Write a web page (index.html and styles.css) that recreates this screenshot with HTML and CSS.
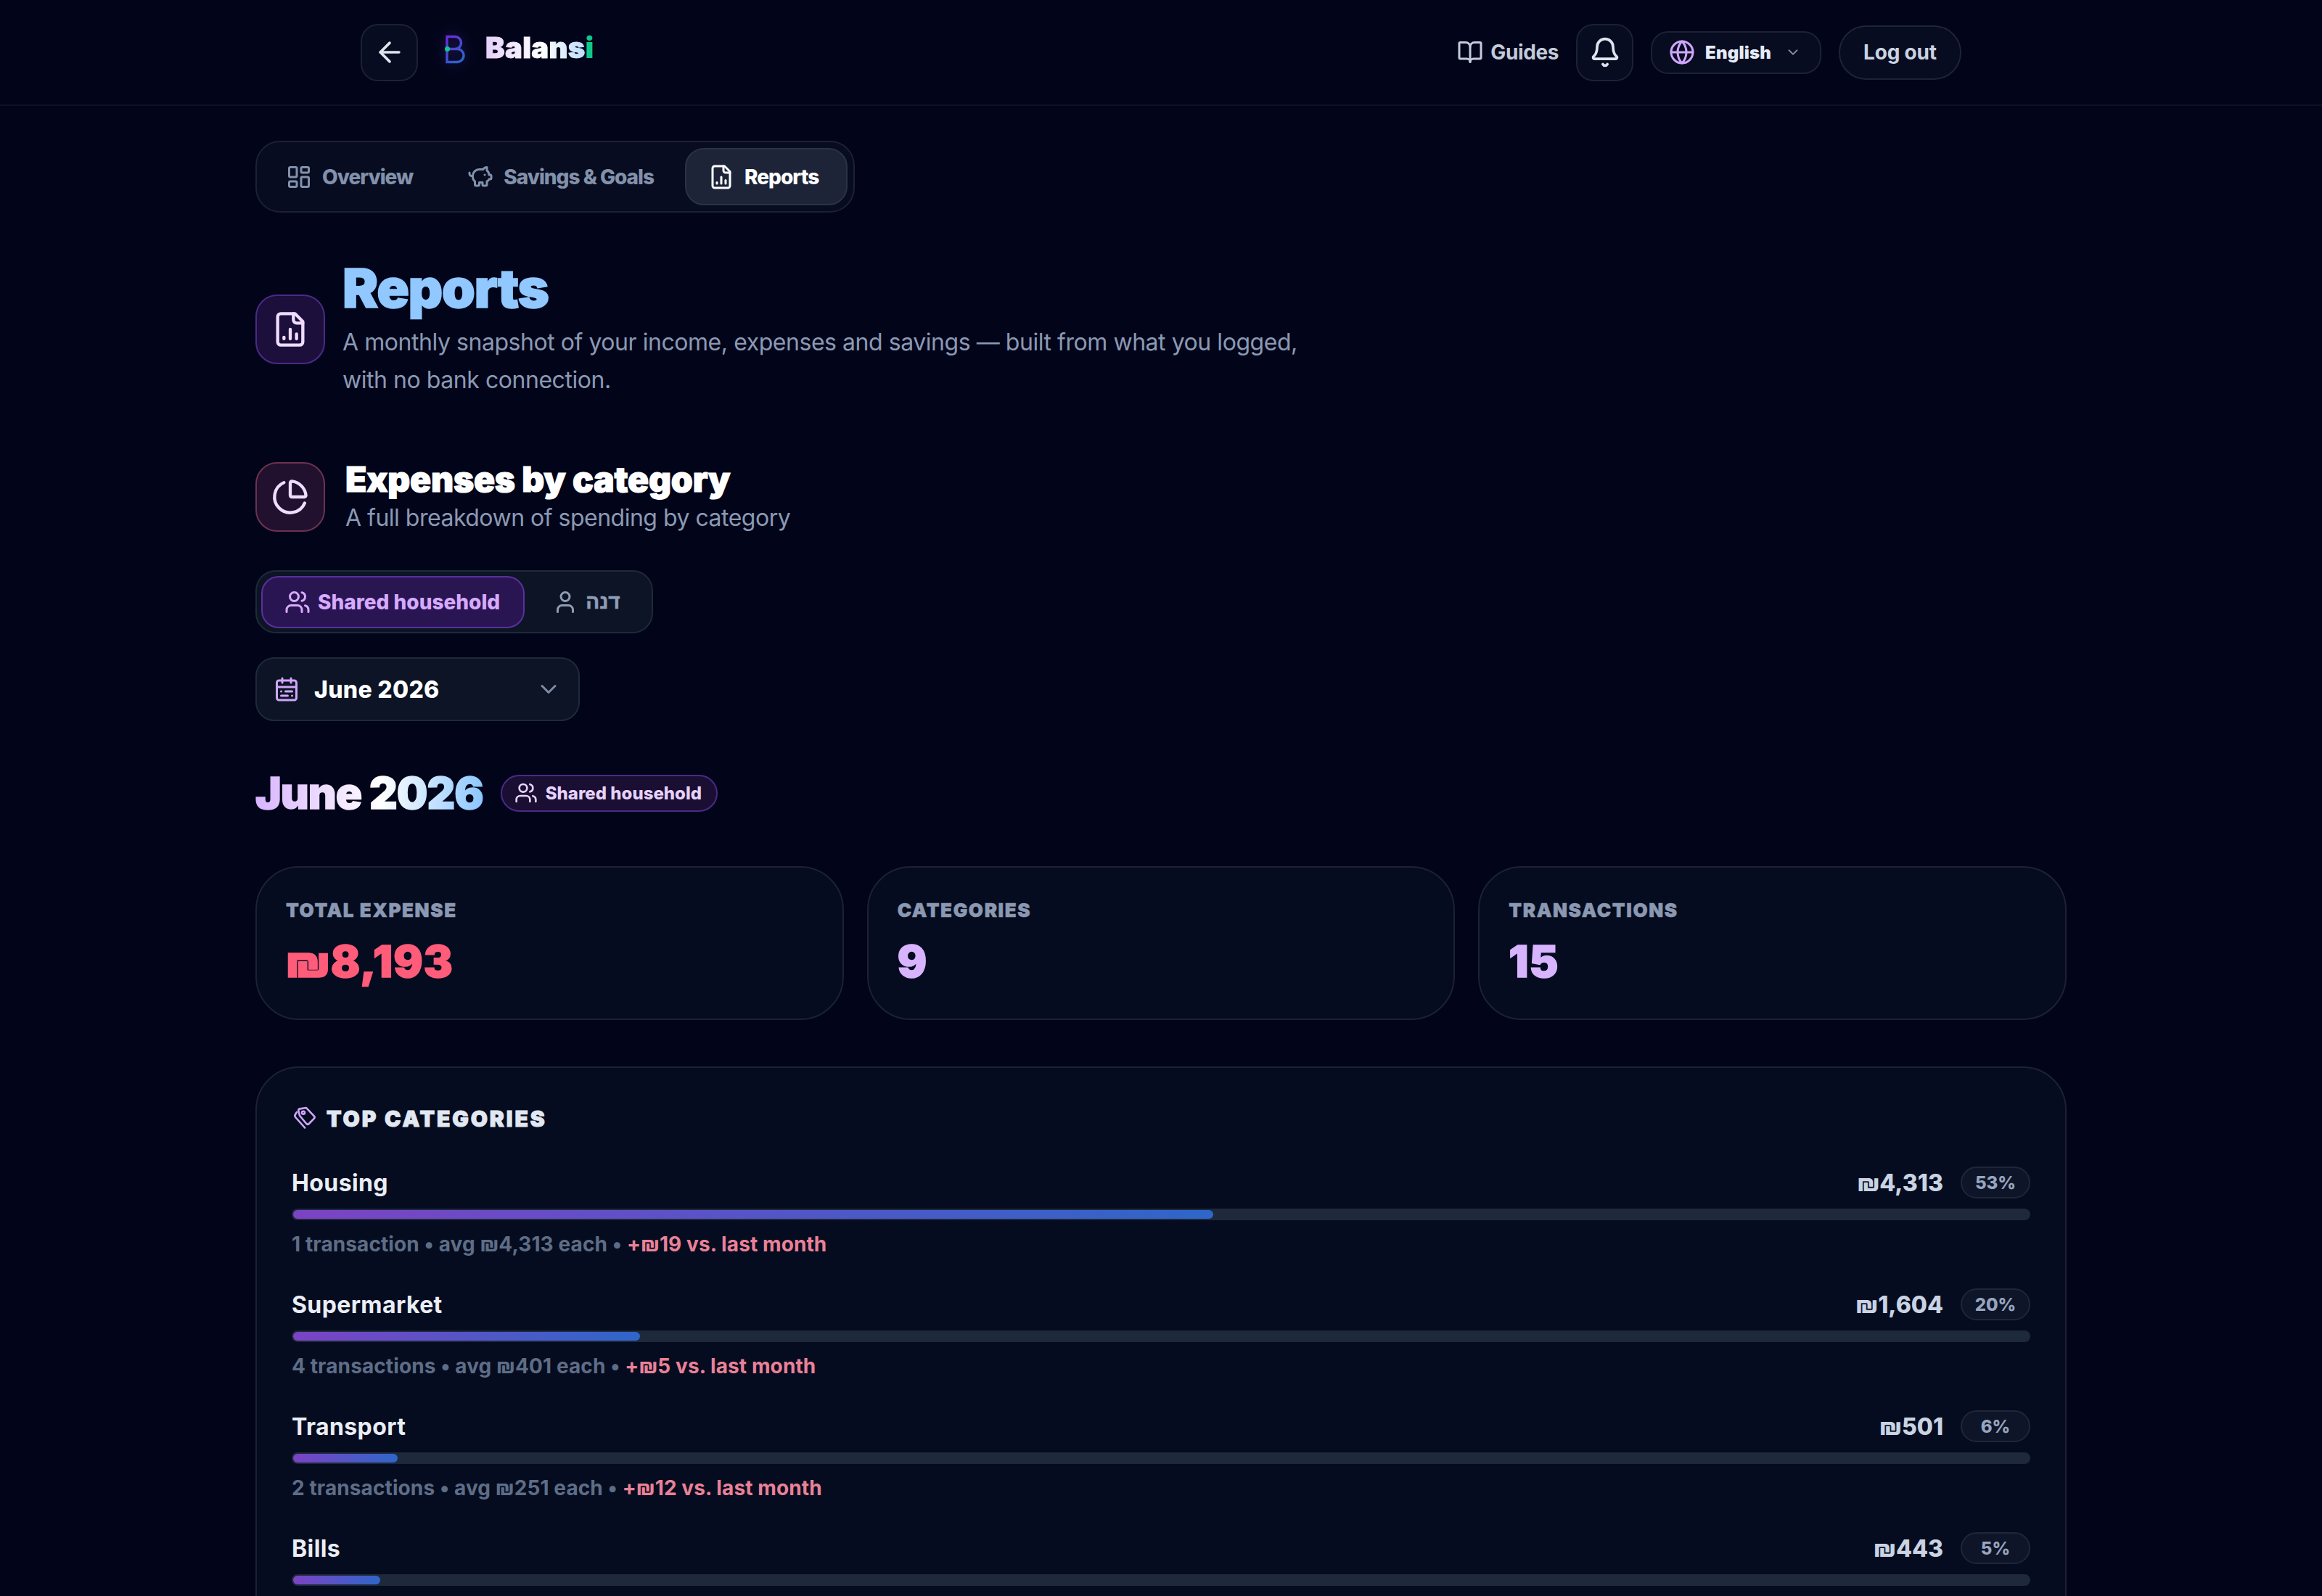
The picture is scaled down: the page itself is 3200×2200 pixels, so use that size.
FILE: index.html
```html
<!DOCTYPE html>
<html lang="en">
<head>
  <meta charset="UTF-8" />
  <meta name="viewport" content="width=device-width, initial-scale=1.0" />
  <title>Balansi - Reports</title>
  <link rel="stylesheet" href="styles.css">
</head>
<body>
  <svg class="sprite" aria-hidden="true">
    <defs>
      <linearGradient id="logoGrad" x1="0" y1="0" x2="0.6" y2="1">
        <stop offset="0" stop-color="#6d2bd9" />
        <stop offset="1" stop-color="#2f62c9" />
      </linearGradient>
      <symbol id="i-back" viewBox="0 0 24 24"><path d="m12 19-7-7 7-7" /><path d="M19 12H5" /></symbol>
      <symbol id="i-grid" viewBox="0 0 24 24"><rect x="3" y="3" width="7" height="9" rx="1" /><rect x="14" y="3" width="7" height="5" rx="1" /><rect x="14" y="12" width="7" height="9" rx="1" /><rect x="3" y="16" width="7" height="5" rx="1" /></symbol>
      <symbol id="i-piggy" viewBox="0 0 24 24"><path d="M11 17h3v2a1 1 0 0 0 1 1h2a1 1 0 0 0 1-1v-3a3.160 3.160 0 0 0 2-2h1a1 1 0 0 0 1-1v-2a1 1 0 0 0-1-1h-1a5 5 0 0 0-2-4V3a4 4 0 0 0-3.200 1.600l-.3.4H11a6 6 0 0 0-6 6v1a5 5 0 0 0 2 4v3a1 1 0 0 0 1 1h2a1 1 0 0 0 1-1z" /><path d="M16 10h.01" /><path d="M2 8v1a2 2 0 0 0 2 2h1" /></symbol>
      <symbol id="i-report" viewBox="0 0 24 24"><path d="M15 2H6a2 2 0 0 0-2 2v16a2 2 0 0 0 2 2h12a2 2 0 0 0 2-2V7Z" /><path d="M14 2v4a2 2 0 0 0 2 2h4" /><path d="M8 18v-1" /><path d="M12 18v-6" /><path d="M16 18v-3" /></symbol>
      <symbol id="i-pie" viewBox="0 0 24 24"><path d="M21 12c.552 0 1.005-.449.95-.998a10 10 0 0 0-8.953-8.951c-.55-.055-.998.398-.998.95v8a1 1 0 0 0 1 1z" /><path d="M21.210 15.890A10 10 0 1 1 8 2.830" /></symbol>
      <symbol id="i-users" viewBox="0 0 24 24"><path d="M16 21v-2a4 4 0 0 0-4-4H6a4 4 0 0 0-4 4v2" /><circle cx="9" cy="7" r="4" /><path d="M22 21v-2a4 4 0 0 0-3-3.870" /><path d="M16 3.130a4 4 0 0 1 0 7.750" /></symbol>
      <symbol id="i-user" viewBox="0 0 24 24"><path d="M19 21v-2a4 4 0 0 0-4-4H9a4 4 0 0 0-4 4v2" /><circle cx="12" cy="7" r="4" /></symbol>
      <symbol id="i-calendar" viewBox="0 0 24 24"><rect x="3" y="4" width="18" height="18" rx="2" /><path d="M16 2v4" /><path d="M8 2v4" /><path d="M3 10h18" /><path d="M17 14h-6" /><path d="M13 18H7" /><path d="M7 14h.01" /><path d="M17 18h.01" /></symbol>
      <symbol id="i-chevron" viewBox="0 0 24 24"><path d="m6 9 6 6 6-6" /></symbol>
      <symbol id="i-tags" viewBox="10 12 36 36"><g stroke-width="2.600"><path d="M19.300 19a2.500 2.500 0 0 1 2.300-2.600l7-1.200a2.500 2.500 0 0 1 2.200.7l10 10.500a2.500 2.500 0 0 1 0 3.400l-7 7.200a2.500 2.500 0 0 1-3.500 0L21.500 26.500a2.500 2.500 0 0 1-.7-1.700z" /><circle cx="26" cy="21.700" r="2" /><path d="M17 21l-2.200 3.500a3 3 0 0 0 .3 3.500l13 14.500" /></g></symbol>
      <symbol id="i-book" viewBox="0 0 24 24"><path d="M12 7v14" /><path d="M3 18a1 1 0 0 1-1-1V4a1 1 0 0 1 1-1h5a4 4 0 0 1 4 4 4 4 0 0 1 4-4h5a1 1 0 0 1 1 1v13a1 1 0 0 1-1 1h-6a3 3 0 0 0-3 3 3 3 0 0 0-3-3z" /></symbol>
      <symbol id="i-bell" viewBox="0 0 24 24"><path d="M10.268 21a2 2 0 0 0 3.464 0" /><path d="M3.262 15.326A1 1 0 0 0 4 17h16a1 1 0 0 0 .74-1.673C19.410 13.956 18 12.499 18 8A6 6 0 0 0 6 8c0 4.499-1.411 5.956-2.738 7.326" /></symbol>
      <symbol id="i-globe" viewBox="0 0 24 24"><circle cx="12" cy="12" r="10" /><path d="M12 2a14.500 14.500 0 0 0 0 20 14.500 14.500 0 0 0 0-20" /><path d="M2 12h20" /></symbol>
    </defs>
  </svg>

  <header class="topbar">
    <div class="topbar-inner">
      <div class="topbar-side">
        <button class="square-btn"><svg class="icon icon-44"><use href="#i-back" /></svg></button>
        <svg class="logo-mark" viewBox="0 0 30 40">
          <path d="M3 2.500h11a8.500 8.500 0 0 1 0 17H3z M3 19.500h14a9 9 0 0 1 0 18H3z" fill="none" stroke="url(#logoGrad)" stroke-width="3.400" />
          <circle cx="3.500" cy="19.500" r="3.500" fill="#10c98a" />
        </svg>
        <span class="brand"><span class="brand-grad">Balans</span><span class="brand-i">i</span></span>
      </div>
      <div class="topbar-side right">
        <a class="guides"><svg class="icon icon-36"><use href="#i-book" /></svg>Guides</a>
        <button class="square-btn"><svg class="icon icon-44"><use href="#i-bell" /></svg></button>
        <div class="lang">
          <svg class="icon icon-36 purple"><use href="#i-globe" /></svg>
          <span>English</span>
          <svg class="icon icon-22 muted"><use href="#i-chevron" /></svg>
        </div>
        <button class="logout">Log out</button>
      </div>
    </div>
  </header>

  <main class="page">
    <nav class="tabs">
      <a class="tab"><svg class="icon icon-36"><use href="#i-grid" /></svg>Overview</a>
      <a class="tab"><svg class="icon icon-36"><use href="#i-piggy" /></svg>Savings &amp; Goals</a>
      <a class="tab active"><svg class="icon icon-36"><use href="#i-report" /></svg>Reports</a>
    </nav>

    <section class="page-head">
      <div class="icon-box violet"><svg class="icon icon-52"><use href="#i-report" /></svg></div>
      <div class="page-text">
        <h1>Reports</h1>
        <p class="page-sub">A monthly snapshot of your income, expenses and savings — built from what you logged, with no bank connection.</p>
      </div>
    </section>

    <section class="section-head">
      <div class="icon-box plum"><svg class="icon icon-52"><use href="#i-pie" /></svg></div>
      <div>
        <h2>Expenses by category</h2>
        <p class="section-sub">A full breakdown of spending by category</p>
      </div>
    </section>

    <div class="scope">
      <button class="scope-btn active"><svg class="icon icon-36"><use href="#i-users" /></svg>Shared household</button>
      <button class="scope-btn"><svg class="icon icon-36"><use href="#i-user" /></svg><span class="he">דנה</span></button>
    </div>

    <div class="month-select">
      <svg class="icon icon-36 purple"><use href="#i-calendar" /></svg>
      <span>June 2026</span>
      <svg class="icon icon-36 muted chev"><use href="#i-chevron" /></svg>
    </div>

    <div class="month-head">
      <h3>June 2026</h3>
      <span class="badge"><svg class="icon icon-32"><use href="#i-users" /></svg>Shared household</span>
    </div>

    <div class="stats">
      <div class="stat">
        <div class="stat-label">TOTAL EXPENSE</div>
        <div class="stat-value red">₪8,193</div>
      </div>
      <div class="stat">
        <div class="stat-label">CATEGORIES</div>
        <div class="stat-value lilac">9</div>
      </div>
      <div class="stat">
        <div class="stat-label">TRANSACTIONS</div>
        <div class="stat-value lilac">15</div>
      </div>
    </div>

    <section class="top-card">
      <div class="top-title"><svg class="icon icon-36 purple"><use href="#i-tags" /></svg>TOP CATEGORIES</div>

      <div class="cat">
        <div class="cat-row">
          <span class="cat-name">Housing</span>
          <span class="cat-amount">₪4,313</span>
          <span class="pct">53%</span>
        </div>
        <div class="track"><div class="fill" style="width: 53%"></div></div>
        <div class="cat-meta">1 transaction • avg ₪4,313 each • <span class="delta">+₪19 vs. last month</span></div>
      </div>

      <div class="cat">
        <div class="cat-row">
          <span class="cat-name">Supermarket</span>
          <span class="cat-amount">₪1,604</span>
          <span class="pct">20%</span>
        </div>
        <div class="track"><div class="fill" style="width: 20%"></div></div>
        <div class="cat-meta">4 transactions • avg ₪401 each • <span class="delta">+₪5 vs. last month</span></div>
      </div>

      <div class="cat">
        <div class="cat-row">
          <span class="cat-name">Transport</span>
          <span class="cat-amount">₪501</span>
          <span class="pct">6%</span>
        </div>
        <div class="track"><div class="fill" style="width: 6%"></div></div>
        <div class="cat-meta">2 transactions • avg ₪251 each • <span class="delta">+₪12 vs. last month</span></div>
      </div>

      <div class="cat">
        <div class="cat-row">
          <span class="cat-name">Bills</span>
          <span class="cat-amount">₪443</span>
          <span class="pct">5%</span>
        </div>
        <div class="track"><div class="fill" style="width: 5%"></div></div>
      </div>
    </section>
  </main>
</body>
</html>
```

FILE: styles.css
```css
* {
  padding: 0;
  margin: 0;
  box-sizing: border-box;
}
html, body {
  height: 100%;
  overflow: hidden;
}
body {
  background-color: #02051a;
  color: #fff;
  font-family: Inter, "Noto Sans", "Liberation Sans", sans-serif;
}
button {
  font-family: inherit;
  color: inherit;
}
.sprite {
  width: 0;
  height: 0;
  display: block;
}

/* icons */
.icon {
  fill: none;
  stroke: currentColor;
  stroke-width: 2;
  stroke-linecap: round;
  stroke-linejoin: round;
  flex-shrink: 0;
}
.icon-22 { width: 22px; height: 22px; }
.icon-32 { width: 32px; height: 32px; }
.icon-36 { width: 36px; height: 36px; }
.icon-44 { width: 44px; height: 44px; }
.icon-52 { width: 52px; height: 52px; }
.purple { color: #d0a6fb; }
.muted { color: #7f8ca3; }

/* top bar */
.topbar {
  height: 146px;
  border-bottom: 2px solid #0e1224;
}
.topbar-inner {
  width: 2206px;
  height: 144px;
  margin: 0 auto;
  display: flex;
  align-items: center;
  justify-content: space-between;
}
.topbar-side {
  display: flex;
  align-items: center;
}
.topbar-side.right {
  gap: 24px;
}
.square-btn {
  width: 79px;
  height: 79px;
  border-radius: 24px;
  border: 2px solid #1c2133;
  background-color: #070c20;
  color: #dfe5ef;
  display: flex;
  align-items: center;
  justify-content: center;
}
.logo-mark {
  width: 30px;
  height: 40px;
  margin-left: 37px;
  margin-top: -8px;
  filter: drop-shadow(0 0 8px rgba(90, 60, 200, 0.45));
}
.brand {
  font-size: 40px;
  font-weight: 900;
  letter-spacing: 0.3px;
  -webkit-text-stroke: 1px transparent;
  margin-left: 26px;
  margin-top: -14px;
}
.brand-grad {
  background: linear-gradient(90deg, #e4d0fb, #ffffff 55%, #bfdcfd);
  -webkit-background-clip: text;
  background-clip: text;
  color: transparent;
}
.brand-i {
  color: #0ec98a;
}
.guides {
  display: flex;
  align-items: center;
  gap: 10px;
  font-size: 28px;
  font-weight: 700;
  letter-spacing: -0.4px;
  color: #c3cbd9;
}
.lang {
  height: 59px;
  width: 235px;
  border-radius: 24px;
  border: 2px solid #1c2133;
  background-color: #070c20;
  display: flex;
  align-items: center;
  padding: 0 26px 0 23px;
  gap: 14px;
  font-size: 24px;
  font-weight: 900;
  letter-spacing: 0.2px;
  color: #e6ebf5;
}
.lang .muted {
  margin-left: auto;
}
.logout {
  width: 169px;
  height: 75px;
  border-radius: 38px;
  border: 2px solid #1f2336;
  background-color: #070c20;
  font-size: 28px;
  font-weight: 700;
  letter-spacing: -0.2px;
  color: #cbd3e0;
}

/* main column */
.page {
  width: 2496px;
  margin: 0 auto;
  padding-top: 48px;
}

.tabs {
  display: inline-flex;
  gap: 8px;
  padding: 8px;
  border: 2px solid #1c2133;
  border-radius: 34px;
  background-color: #070c20;
  vertical-align: top;
}
.tab {
  height: 79px;
  padding: 0 33px 0 30px;
  border: 2px solid transparent;
  border-radius: 26px;
  display: flex;
  align-items: center;
  gap: 14px;
  font-size: 28px;
  font-weight: 800;
  letter-spacing: -1px;
  color: #8291ab;
}
.tab.active {
  padding-right: 38px;
  background-color: #1d2438;
  border-color: #2b3246;
  color: #fff;
}

.page-head,
.section-head {
  display: flex;
  align-items: center;
}
.page-head {
  margin-top: 59px;
  gap: 24px;
}
.page-text {
  padding-bottom: 6px;
}
.icon-box {
  width: 96px;
  height: 96px;
  border-radius: 30px;
  display: flex;
  align-items: center;
  justify-content: center;
  color: #f0dcff;
  flex-shrink: 0;
}
.icon-box.violet {
  background-color: #1c0f3c;
  border: 2px solid #4a2a86;
}
.icon-box.plum {
  background-color: #22102f;
  border: 2px solid #6b3350;
}
h1 {
  font-size: 74px;
  line-height: 90px;
  margin-bottom: 4px;
  font-weight: 900;
  letter-spacing: -1.5px;
  -webkit-text-stroke: 1.5px #90c8ff;
  color: #90c8ff;
}
.page-sub {
  max-width: 1360px;
  font-size: 32px;
  line-height: 52px;
  letter-spacing: -0.45px;
  color: #8b99b3;
}
.section-head {
  margin-top: 80px;
  gap: 28px;
}
h2 {
  font-size: 48px;
  line-height: 50px;
  margin-bottom: 8px;
  font-weight: 900;
  letter-spacing: -0.2px;
  -webkit-text-stroke: 1.2px #fff;
  color: #fff;
}
.section-sub {
  font-size: 32px;
  line-height: 40px;
  letter-spacing: -0.5px;
  color: #8b99b3;
}

.scope {
  width: 548px;
  height: 87px;
  margin-top: 52px;
  padding: 6px;
  display: flex;
  border: 2px solid #1e2a3a;
  border-radius: 28px;
  background-color: #0c1425;
  gap: 6px;
}
.scope-btn {
  height: 72px;
  background: none;
  border: 2px solid transparent;
  border-radius: 24px;
  padding: 0 32px 0 30px;
  display: flex;
  align-items: center;
  gap: 10px;
  font-size: 28px;
  font-weight: 800;
  color: #8f9db4;
}
.scope-btn.active {
  background-color: #2a1553;
  border-color: #5b309d;
  color: #d6aafd;
}
.he {
  font-family: "Liberation Sans", "DejaVu Sans", sans-serif;
  font-size: 28px;
  font-weight: 700;
  -webkit-text-stroke: 0.6px currentColor;
}

.month-select {
  width: 447px;
  height: 88px;
  margin-top: 33px;
  padding: 0 23px 0 23px;
  display: flex;
  align-items: center;
  gap: 20px;
  border: 2px solid #1e2a3a;
  border-radius: 26px;
  background-color: #0c1425;
  font-size: 32px;
  font-weight: 800;
  letter-spacing: 0.3px;
}
.month-select .chev {
  margin-left: auto;
}

.month-head {
  margin-top: 68px;
  display: flex;
  align-items: center;
  gap: 24px;
}
h3 {
  font-size: 60px;
  font-weight: 900;
  letter-spacing: -1px;
  line-height: 62px;
  -webkit-text-stroke: 1.5px transparent;
  background: linear-gradient(90deg, #d8b4fe, #ffffff 55%, #8cc6ff);
  -webkit-background-clip: text;
  background-clip: text;
  color: transparent;
}
.badge {
  height: 51px;
  padding: 0 20px 0 17px;
  display: inline-flex;
  align-items: center;
  gap: 11px;
  border: 2px solid #4a2a86;
  border-radius: 26px;
  background-color: #1a0e33;
  font-size: 24px;
  font-weight: 800;
  color: #e6d2fb;
}

.stats {
  margin-top: 70px;
  display: grid;
  grid-template-columns: repeat(3, 1fr);
  gap: 32px;
}
.stat {
  height: 212px;
  padding: 44px 40px;
  border: 2px solid #1c2133;
  border-radius: 60px;
  background-color: #060c1f;
}
.stat-label {
  font-size: 26px;
  line-height: 30px;
  font-weight: 900;
  letter-spacing: 1.6px;
  -webkit-text-stroke: 0.5px #8a98b2;
  color: #8a98b2;
}
.stat-value {
  margin-top: 20px;
  font-size: 60px;
  line-height: 70px;
  font-weight: 900;
  letter-spacing: 1px;
  -webkit-text-stroke: 1.5px currentColor;
}
.red { color: #ff5c7a; }
.lilac { color: #d8b4fe; }

.top-card {
  margin-top: 64px;
  padding: 50px 48px;
  border: 2px solid #1c2133;
  border-radius: 60px;
  background-color: #060c1f;
}
.top-title {
  display: flex;
  align-items: center;
  gap: 12px;
  margin-bottom: 46px;
  font-size: 30px;
  line-height: 40px;
  font-weight: 900;
  letter-spacing: 2.9px;
  -webkit-text-stroke: 1px #e2e8f2;
  color: #e2e8f2;
}
.cat {
  margin-top: 32px;
  height: 136px;
}
.cat-row {
  height: 44px;
  display: flex;
  align-items: center;
  gap: 24px;
}
.cat-name {
  font-size: 32px;
  font-weight: 700;
  letter-spacing: 0.4px;
  color: #eaeef6;
  margin-right: auto;
}
.cat-amount {
  font-size: 32px;
  font-weight: 800;
  color: #c9d3e2;
}
.pct {
  width: 96px;
  height: 44px;
  border: 2px solid #1f2638;
  border-radius: 22px;
  background-color: #0e1528;
  display: flex;
  align-items: center;
  justify-content: center;
  font-size: 24px;
  font-weight: 800;
  color: #97a5bf;
}
.track {
  margin-top: 14px;
  height: 16px;
  border-radius: 8px;
  background-color: #1e293b;
  padding: 2px;
}
.fill {
  height: 12px;
  border-radius: 6px;
  background: linear-gradient(90deg, #7c43c4, #2f66c9);
}
.cat-meta {
  margin-top: 15px;
  font-size: 28px;
  line-height: 36px;
  font-weight: 700;
  letter-spacing: 0.1px;
  color: #5e6d87;
}
.delta {
  color: #ea8198;
}
```
